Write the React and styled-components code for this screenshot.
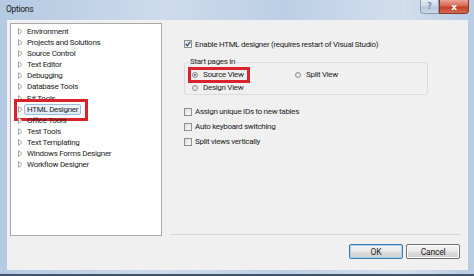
import React from 'react';
import styled, { createGlobalStyle } from 'styled-components';

const GlobalStyle = createGlobalStyle`
  html, body { margin: 0; padding: 0; background: #fff; }
  body {
    font-family: Roboto, 'Open Sans', 'Liberation Sans', sans-serif;
    letter-spacing: -0.3px;
  }
`;

const treeItems = [
  'Environment',
  'Projects and Solutions',
  'Source Control',
  'Text Editor',
  'Debugging',
  'Database Tools',
  'F# Tools',
  'HTML Designer',
  'Office Tools',
  'Test Tools',
  'Text Templating',
  'Windows Forms Designer',
  'Workflow Designer',
];

const options = [
  { label: 'Assign unique IDs to new tables', checked: false },
  { label: 'Auto keyboard switching', checked: false },
  { label: 'Split views vertically', checked: false },
];

const Window = styled.div`
  width: 474px;
  height: 276px;
  box-sizing: border-box;
  display: flex;
  flex-direction: column;
  padding: 0 6px 4px 7px;
  background: linear-gradient(90deg, #b4c9e2 0%, #cddbec 35%, #bccfe6 60%, #d2deed 85%, #b7cbe3 100%);
  border-bottom: 2px solid #3f526b;
  overflow: hidden;
`;

const TitleBar = styled.div`
  height: 21px;
  display: flex;
  align-items: flex-start;
  justify-content: space-between;
`;

const Title = styled.span`
  font-size: 8.5px;
  color: #1b1b1b;
  line-height: 21px;
  margin: -1px 0 0 -1px;
`;

const Caption = styled.div`
  display: flex;
  margin-right: -1px;
`;

const CaptionButton = styled.div`
  width: ${p => (p.$close ? 28 : 17)}px;
  height: 13px;
  display: flex;
  align-items: center;
  justify-content: center;
  font-family: 'DejaVu Sans', sans-serif;
  font-size: ${p => (p.$close ? 9 : 8)}px;
  font-weight: bold;
  color: ${p => (p.$close ? '#fff' : '#7c8da3')};
  border: 1px solid ${p => (p.$close ? '#8a3a2c' : '#8b9db4')};
  border-top: none;
  border-radius: ${p => (p.$close ? '0 0 4px 0' : '0 0 0 4px')};
  background: ${p =>
    p.$close
      ? 'linear-gradient(180deg, #e9a597 0%, #d56752 45%, #c2402a 55%, #d46a4f 100%)'
      : 'linear-gradient(180deg, #e3ebf4 0%, #cdd9e6 45%, #b8c8da 55%, #cbd8e6 100%)'};
`;

const Body = styled.div`
  flex: 1;
  display: flex;
  flex-direction: column;
  background: #f0f0f0;
  padding: 3px 8px 11px 3px;
`;

const Main = styled.div`
  display: flex;
  gap: 8px;
  height: 213px;
`;

const Tree = styled.ul`
  list-style: none;
  margin: 0;
  width: 152px;
  box-sizing: border-box;
  background: #fff;
  border: 1px solid #a9a9a9;
  padding: 1.5px 0 0 7px;
`;

const TreeRow = styled.li`
  position: relative;
  display: flex;
  align-items: center;
  height: 11.17px;
  font-size: 8px;
  color: #1e1e1e;

  ${p =>
    p.$marked &&
    `
    &::after {
      content: '';
      position: absolute;
      left: -4px;
      top: -4.5px;
      width: 74px;
      height: 22px;
      box-sizing: border-box;
      border: 3px solid #d9222b;
    }
  `}
`;

const Arrow = styled.svg`
  width: 5px;
  height: 7px;
  margin-right: 1px;
  flex: none;
`;

const TreeLabel = styled.span`
  padding: 0 2px;
  line-height: 9px;
  border: 1px solid ${p => (p.$selected ? '#9ebde4' : 'transparent')};
  border-radius: 2px;
  background: ${p => (p.$selected ? 'linear-gradient(180deg, #f1f7fe, #dfebfa)' : 'transparent')};
  white-space: nowrap;
`;

const Page = styled.div`
  flex: 1;
  display: flex;
  flex-direction: column;
  padding: 15px 0 0 14px;
  border-bottom: 1px solid #d4d4d4;
  margin-bottom: 1px;
`;

const CheckRow = styled.label`
  display: flex;
  align-items: center;
  gap: 3px;
  height: ${p => p.$h || 15}px;
  font-size: 8px;
  color: #1e1e1e;
  white-space: nowrap;
`;

const Box = styled.span`
  width: 8px;
  height: 8px;
  box-sizing: border-box;
  border: 1px solid #8e8f8f;
  background: linear-gradient(135deg, #dcdcdc, #fbfbfb);
  display: flex;
  align-items: center;
  justify-content: center;
  flex: none;
`;

const Group = styled.fieldset`
  margin: 6px 0 0 0;
  width: 244px;
  box-sizing: border-box;
  border: 1px solid #d5dde3;
  border-radius: 3px;
  padding: 0 0 0 7px;
  display: grid;
  grid-template-columns: 103px 1fr;
  grid-auto-rows: 13px;
`;

const Legend = styled.legend`
  font-size: 8px;
  color: #1e1e1e;
  padding: 0 1px;
  margin-left: -3px;
  line-height: 12px;
`;

const RadioRow = styled.label`
  position: relative;
  display: flex;
  align-items: center;
  gap: 5px;
  font-size: 8px;
  color: #1e1e1e;
  white-space: nowrap;

  ${p =>
    p.$marked &&
    `
    &::after {
      content: '';
      position: absolute;
      left: -4px;
      top: -1.5px;
      width: 62px;
      height: 16px;
      box-sizing: border-box;
      border: 3px solid #d9222b;
    }
  `}
`;

const Radio = styled.span`
  width: 6px;
  height: 6px;
  box-sizing: border-box;
  border-radius: 50%;
  border: 1px solid #8e8f8f;
  background: linear-gradient(135deg, #d8d8d8, #fafafa);
  display: flex;
  align-items: center;
  justify-content: center;
  flex: none;

  &::after {
    content: '';
    width: 2px;
    height: 2px;
    border-radius: 50%;
    background: ${p => (p.$on ? '#2a6cc4' : 'transparent')};
  }
`;

const OptionList = styled.div`
  display: flex;
  flex-direction: column;
  margin-top: 9px;
`;

const Footer = styled.div`
  display: flex;
  justify-content: flex-end;
  gap: 3px;
  padding-top: 8px;
`;

const Button = styled.button`
  width: 54px;
  height: 15px;
  padding: 0;
  font-family: inherit;
  letter-spacing: -0.2px;
  font-size: 8.5px;
  color: #1e1e1e;
  border-radius: 2px;
  border: 1px solid ${p => (p.$default ? '#3d7bad' : '#707070')};
  box-shadow: ${p => (p.$default ? 'inset 0 0 0 1px #a7d3f0' : 'inset 0 0 0 1px #fcfcfc')};
  background: linear-gradient(180deg, #f2f2f2 0%, #ebebeb 45%, #dddddd 55%, #cfcfcf 100%);
`;

const TreeArrow = () => (
  <Arrow viewBox="0 0 5 7">
    <path d="M0.5 0.5 L4 3.5 L0.5 6.5 Z" fill="#fff" stroke="#a6a6a6" strokeWidth="1" />
  </Arrow>
);

const Check = () => (
  <svg width="6" height="6" viewBox="0 0 6 6">
    <path d="M0.8 3 L2.4 4.7 L5.3 0.9" fill="none" stroke="#3b4d74" strokeWidth="1.3" />
  </svg>
);

export default function App() {
  return (
    <>
      <GlobalStyle />
      <Window>
        <TitleBar>
          <Title>Options</Title>
          <Caption>
            <CaptionButton>?</CaptionButton>
            <CaptionButton $close>x</CaptionButton>
          </Caption>
        </TitleBar>
        <Body>
          <Main>
            <Tree>
              {treeItems.map(item => (
                <TreeRow key={item} $marked={item === 'HTML Designer'}>
                  <TreeArrow />
                  <TreeLabel $selected={item === 'HTML Designer'}>{item}</TreeLabel>
                </TreeRow>
              ))}
            </Tree>
            <Page>
              <CheckRow $h={12}>
                <Box>
                  <Check />
                </Box>
                Enable HTML designer (requires restart of Visual Studio)
              </CheckRow>
              <Group>
                <Legend>Start pages in</Legend>
                <RadioRow $marked>
                  <Radio $on />
                  Source View
                </RadioRow>
                <RadioRow>
                  <Radio />
                  Split View
                </RadioRow>
                <RadioRow>
                  <Radio />
                  Design View
                </RadioRow>
              </Group>
              <OptionList>
                {options.map(o => (
                  <CheckRow key={o.label}>
                    <Box>{o.checked && <Check />}</Box>
                    {o.label}
                  </CheckRow>
                ))}
              </OptionList>
            </Page>
          </Main>
          <Footer>
            <Button $default>OK</Button>
            <Button>Cancel</Button>
          </Footer>
        </Body>
      </Window>
    </>
  );
}
